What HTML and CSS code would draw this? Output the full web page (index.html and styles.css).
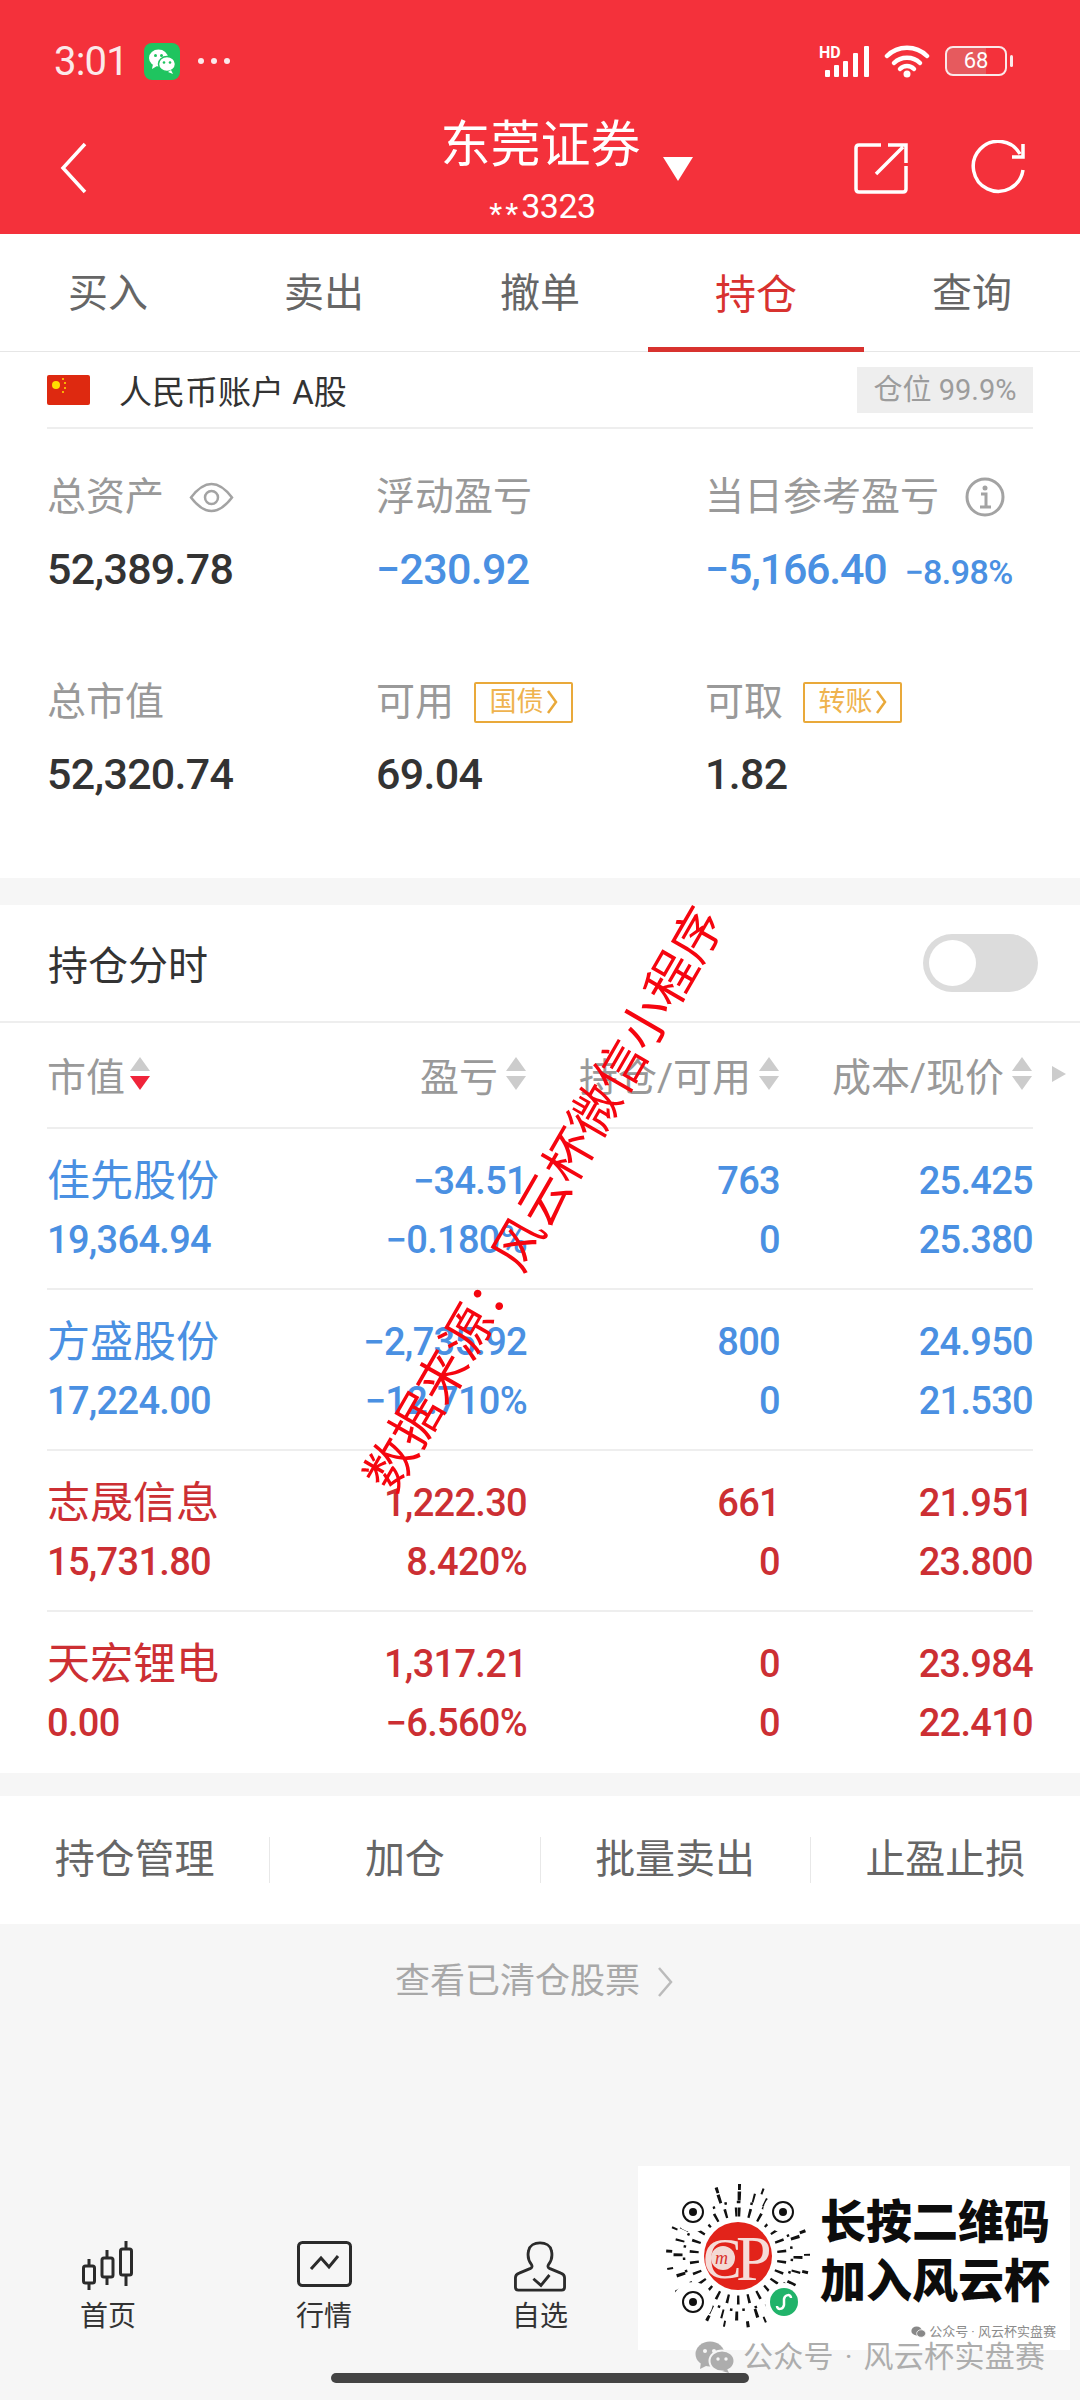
FILE: index.html
```html
<!DOCTYPE html>
<html lang="zh-CN">
<head>
    <meta charset="UTF-8">
    <meta name="viewport" content="width=device-width, initial-scale=1.0">
    <title>东莞证券</title>
    <link rel="stylesheet" href="styles.css">
</head>
<body>
    <div class="page">
        <!-- Red header -->
        <header class="header">
            <div class="status-bar">
                <div class="status-left">
                    <span class="time">3:01</span>
                    <svg class="wechat-badge" viewBox="0 0 36 37">
                        <rect width="36" height="37" rx="8" fill="#1fc45f"/>
                        <ellipse cx="14.5" cy="15" rx="9.5" ry="8.5" fill="#fff"/>
                        <path d="M9 21l-1 5 5-3z" fill="#fff"/>
                        <ellipse cx="23" cy="21" rx="8.5" ry="7.5" fill="#fff" stroke="#1fc45f" stroke-width="1.5"/>
                        <path d="M27 27l2 4-5-2z" fill="#fff"/>
                        <circle cx="11.5" cy="12.5" r="1.5" fill="#1fc45f"/>
                        <circle cx="17.5" cy="12.5" r="1.5" fill="#1fc45f"/>
                        <circle cx="20" cy="19.5" r="1.3" fill="#1fc45f"/>
                        <circle cx="26" cy="19.5" r="1.3" fill="#1fc45f"/>
                    </svg>
                    <span class="dots"><i></i><i></i><i></i></span>
                </div>
                <div class="status-right">
                    <svg class="signal" viewBox="0 0 51 32">
                        <text x="0" y="13" class="hd">HD</text>
                        <g fill="#fff">
                            <rect x="6" y="25" width="5" height="7" rx="1"/>
                            <rect x="15" y="20" width="5" height="12" rx="1"/>
                            <rect x="24" y="16" width="5" height="16" rx="1"/>
                            <rect x="34" y="8" width="5" height="24" rx="1"/>
                            <rect x="45" y="1" width="5" height="31" rx="1"/>
                        </g>
                    </svg>
                    <svg class="wifi" viewBox="0 0 46 34">
                        <g fill="none" stroke="#fff" stroke-width="4.5" stroke-linecap="round">
                            <path d="M3 12C14 1 32 1 43 12"/>
                            <path d="M10 19C17 12 29 12 36 19"/>
                            <path d="M16 25C20 21 26 21 30 25"/>
                        </g>
                        <circle cx="23" cy="30" r="3.5" fill="#fff"/>
                    </svg>
                    <div class="battery">
                        <div class="battery-body"><span class="battery-num">68</span></div>
                        <i class="battery-nub"></i>
                    </div>
                </div>
            </div>
            <div class="nav-bar">
                <svg class="back" viewBox="0 0 27 52"><path d="M25 2L3 26l22 24" fill="none" stroke="#fff" stroke-width="3.5"/></svg>
                <div class="nav-title">
                    <div class="title-line">
                        <span class="title-text">东莞证券</span>
                        <i class="title-arrow"></i>
                    </div>
                    <div class="account-no"><span class="stars">**</span>3323</div>
                </div>
                <div class="nav-icons">
                    <svg class="share" viewBox="0 0 54 52">
                        <path d="M27 3H5C3 3 2 4 2 6v41c0 2 1 3 3 3h44c2 0 3-1 3-3V24" fill="none" stroke="#fff" stroke-width="3.5"/>
                        <path d="M22 32L49 5M34 3h18v18" fill="none" stroke="#fff" stroke-width="3.5"/>
                    </svg>
                    <svg class="refresh" viewBox="0 0 55 55">
                        <path d="M50 14A25 25 0 1 0 53 30" fill="none" stroke="#fff" stroke-width="3.5"/>
                        <path d="M42 17h11V4" fill="none" stroke="#fff" stroke-width="3.5"/>
                    </svg>
                </div>
            </div>
        </header>

        <!-- Tabs -->
        <nav class="tabs">
            <div class="tab">买入</div>
            <div class="tab">卖出</div>
            <div class="tab">撤单</div>
            <div class="tab tab-active">持仓</div>
            <div class="tab">查询</div>
        </nav>

        <!-- Account summary -->
        <section class="summary">
            <div class="account-row">
                <div class="account-name">
                    <svg class="flag" viewBox="0 0 43 30">
                        <rect width="43" height="30" rx="2" fill="#de2910"/>
                        <circle cx="9" cy="10" r="4" fill="#ffde00"/>
                        <g fill="#ffde00"><circle cx="16" cy="4" r="1"/><circle cx="18" cy="8" r="1"/><circle cx="18" cy="13" r="1"/><circle cx="16" cy="17" r="1"/></g>
                    </svg>
                    <span>人民币账户 A股</span>
                </div>
                <div class="position-badge">仓位 99.9%</div>
            </div>
            <div class="stats">
                <div class="stat">
                    <div class="stat-label">总资产
                        <svg class="eye" viewBox="0 0 45 31">
                            <path d="M2 15.5C10 5 16 2 22.500 2S35 5 43 15.500C35 26 29 29 22.500 29S10 26 2 15.500z" fill="none" stroke="#a3a3a3" stroke-width="2.500"/>
                            <circle cx="22.500" cy="15.500" r="6.500" fill="none" stroke="#a3a3a3" stroke-width="2.500"/>
                        </svg>
                    </div>
                    <div class="stat-value">52,389.78</div>
                </div>
                <div class="stat">
                    <div class="stat-label">浮动盈亏</div>
                    <div class="stat-value blue">−230.92</div>
                </div>
                <div class="stat">
                    <div class="stat-label">当日参考盈亏
                        <svg class="info" viewBox="0 0 40 40">
                            <circle cx="20" cy="20" r="18" fill="none" stroke="#a3a3a3" stroke-width="3"/>
                            <circle cx="20" cy="11" r="2.500" fill="#a3a3a3"/>
                            <path d="M16 17h5v13M15 30h11" fill="none" stroke="#a3a3a3" stroke-width="3"/>
                        </svg>
                    </div>
                    <div class="stat-value blue tight">−5,166.40<span class="stat-pct">−8.98%</span></div>
                </div>
                <div class="stat">
                    <div class="stat-label">总市值</div>
                    <div class="stat-value">52,320.74</div>
                </div>
                <div class="stat">
                    <div class="stat-label">可用<span class="tag">国债<svg class="tag-arrow" viewBox="0 0 12 26"><path d="M2 2l8 11-8 11" fill="none" stroke="#e9a93a" stroke-width="2.500"/></svg></span></div>
                    <div class="stat-value">69.04</div>
                </div>
                <div class="stat">
                    <div class="stat-label">可取<span class="tag">转账<svg class="tag-arrow" viewBox="0 0 12 26"><path d="M2 2l8 11-8 11" fill="none" stroke="#e9a93a" stroke-width="2.500"/></svg></span></div>
                    <div class="stat-value">1.82</div>
                </div>
            </div>
        </section>

        <!-- Holdings -->
        <section class="holdings">
            <div class="toggle-row">
                <span>持仓分时</span>
                <div class="toggle"><i class="toggle-knob"></i></div>
            </div>
            <div class="table">
                <div class="table-head">
                    <div class="th th-left">市值<span class="sort sort-down"></span></div>
                    <div class="th">盈亏<span class="sort"></span></div>
                    <div class="th">持仓/可用<span class="sort"></span></div>
                    <div class="th">成本/现价<span class="sort"></span><i class="more-arrow"></i></div>
                </div>
                <div class="table-row loss">
                    <div class="cell-left"><div class="stock-name">佳先股份</div><div>19,364.94</div></div>
                    <div class="cell"><div>−34.51</div><div>−0.180%</div></div>
                    <div class="cell"><div>763</div><div>0</div></div>
                    <div class="cell"><div>25.425</div><div>25.380</div></div>
                </div>
                <div class="table-row loss">
                    <div class="cell-left"><div class="stock-name">方盛股份</div><div>17,224.00</div></div>
                    <div class="cell"><div>−2,735.92</div><div>−12.710%</div></div>
                    <div class="cell"><div>800</div><div>0</div></div>
                    <div class="cell"><div>24.950</div><div>21.530</div></div>
                </div>
                <div class="table-row gain">
                    <div class="cell-left"><div class="stock-name">志晟信息</div><div>15,731.80</div></div>
                    <div class="cell"><div>1,222.30</div><div>8.420%</div></div>
                    <div class="cell"><div>661</div><div>0</div></div>
                    <div class="cell"><div>21.951</div><div>23.800</div></div>
                </div>
                <div class="table-row gain">
                    <div class="cell-left"><div class="stock-name">天宏锂电</div><div>0.00</div></div>
                    <div class="cell"><div>1,317.21</div><div>−6.560%</div></div>
                    <div class="cell"><div>0</div><div>0</div></div>
                    <div class="cell"><div>23.984</div><div>22.410</div></div>
                </div>
            </div>
        </section>

        <!-- Actions -->
        <section class="actions">
            <div class="action">持仓管理</div>
            <div class="action">加仓</div>
            <div class="action">批量卖出</div>
            <div class="action">止盈止损</div>
        </section>

        <div class="bottom-area">
            <div class="cleared">查看已清仓股票
                <svg class="cleared-arrow" viewBox="0 0 16 30"><path d="M2 1l12 14L2 29" fill="none" stroke="#bbb" stroke-width="2.500"/></svg>
            </div>
            <nav class="bottom-nav">
                <div class="nav-item">
                    <svg class="nav-candle" viewBox="0 0 52 49">
                        <g fill="none" stroke="#2b2b2b" stroke-width="3">
                            <path d="M7 18v7M7 42v7M25 9v8M25 36v8M44 0v8M44 34v11"/>
                            <rect x="1.500" y="25" width="11" height="17" rx="2"/>
                            <rect x="20" y="17" width="11" height="19" rx="2"/>
                            <rect x="38.500" y="8" width="11" height="26" rx="2"/>
                        </g>
                    </svg>
                    <span>首页</span>
                </div>
                <div class="nav-item">
                    <svg class="nav-chart" viewBox="0 0 55 46">
                        <rect x="1.500" y="1.500" width="52" height="43" rx="4" fill="none" stroke="#2b2b2b" stroke-width="3"/>
                        <path d="M14 28l10-11 8 9 9-11" fill="none" stroke="#2b2b2b" stroke-width="3"/>
                    </svg>
                    <span>行情</span>
                </div>
                <div class="nav-item">
                    <svg class="nav-person" viewBox="0 0 56 54">
                        <path d="M19 25C15 20 15 14 16 10C17 5 22 2 28 2C34 2 39 5 40 10C41 14 41 20 37 25C36 27 36 28 38 29L50 34C53 35 54 37 54 39L54 49C54 51 53 52 51 52L5 52C3 52 2 51 2 49L2 39C2 37 3 35 6 34L18 29C20 28 20 27 19 25Z" fill="none" stroke="#2b2b2b" stroke-width="3"/>
                        <path d="M21 40l8 7 9-11" fill="none" stroke="#2b2b2b" stroke-width="3"/>
                    </svg>
                    <span>自选</span>
                </div>
                <div class="nav-item"></div>
                <div class="nav-item"></div>
            </nav>
        </div>

        <!-- Things pasted over the screenshot -->
        <div class="watermark">数据来源：风云杯微信小程序</div>

        <div class="promo">
            <svg class="qr" viewBox="0 0 160 160">
                <g fill="none" stroke="#111" transform="rotate(-90 80 80)">
                    <circle cx="80" cy="80" r="44" stroke-width="9" stroke-dasharray="2.500 8"/>
                    <circle cx="80" cy="80" r="54" stroke-width="2.500" stroke-dasharray="2.500 10"/>
                    <circle cx="80" cy="80" r="60" stroke-width="9" stroke-dasharray="3 12 2 10 3 17"/>
                    <circle cx="80" cy="80" r="69" stroke-width="6" stroke-dasharray="3 21 2 15"/>
                </g>
                <g>
                    <circle cx="35" cy="36" r="20" fill="#fff"/>
                    <circle cx="125" cy="36" r="20" fill="#fff"/>
                    <circle cx="35" cy="126" r="20" fill="#fff"/>
                    <circle cx="126" cy="126" r="19" fill="#fff"/>
                </g>
                <g fill="none" stroke="#111" stroke-width="2">
                    <circle cx="35" cy="36" r="10"/><circle cx="125" cy="36" r="10"/><circle cx="35" cy="126" r="10"/>
                </g>
                <g fill="#111"><circle cx="35" cy="36" r="4"/><circle cx="125" cy="36" r="4"/><circle cx="35" cy="126" r="4"/></g>
                <circle cx="80" cy="80" r="34" fill="#e2231a"/>
                <circle cx="65" cy="82" r="12" fill="#f3d9d4"/>
                <text x="45" y="102" class="qr-c">C</text>
                <text x="78" y="104" class="qr-p">P</text>
                <text x="57" y="88" class="qr-m">m</text>
                <circle cx="126" cy="126" r="14" fill="#21b36a"/>
                <path d="M119 130c0 4 6 4 7-1v-6c1-5 7-5 7-1" fill="none" stroke="#fff" stroke-width="2.500"/>
            </svg>
            <div class="promo-text">
                <div>长按二维码</div>
                <div>加入风云杯</div>
            </div>
            <div class="promo-small">
                <svg class="wx-small" viewBox="0 0 40 32">
                    <ellipse cx="15" cy="13" rx="14" ry="12" fill="#888"/>
                    <ellipse cx="27" cy="20" rx="12" ry="10" fill="#888" stroke="#fff" stroke-width="2"/>
                </svg>公众号 · 风云杯实盘赛
            </div>
        </div>
        <div class="account-mark">
            <svg class="wx-mark" viewBox="0 0 40 32">
                <ellipse cx="15" cy="13" rx="14.500" ry="12.500" fill="#adadad"/>
                <path d="M6 21l-1 7 8-4z" fill="#adadad"/>
                <ellipse cx="27" cy="20" rx="12.500" ry="10.500" fill="#adadad" stroke="#f6f6f6" stroke-width="2"/>
                <path d="M32 28l2 4-7-2z" fill="#adadad"/>
                <g fill="#f6f6f6"><circle cx="10" cy="10" r="2"/><circle cx="19" cy="10" r="2"/><circle cx="23" cy="18" r="1.700"/><circle cx="31" cy="18" r="1.700"/></g>
            </svg>公众号 · 风云杯实盘赛
        </div>
        <div class="home-bar"></div>
    </div>
</body>
</html>
```

FILE: styles.css
```css
* {
    box-sizing: border-box;
}
html, body {
    margin: 0;
    padding: 0;
}
body {
    font-family: Roboto, "Noto Sans CJK SC", sans-serif;
    color: #333;
    background-color: #f6f6f6;
}
svg {
    display: block;
}
.page {
    position: relative;
    width: 1080px;
    height: 2400px;
    display: flex;
    flex-direction: column;
    overflow: hidden;
}

/* header */
.header {
    height: 234px;
    flex: none;
    background-color: #f4313b;
    color: #fff;
}
.status-bar {
    height: 122px;
    padding: 0 67px 0 54px;
    display: flex;
    justify-content: space-between;
    align-items: center;
}
.status-left, .status-right {
    display: flex;
    align-items: center;
}
.time {
    font-size: 40px;
    letter-spacing: -0.8px;
    width: 90px;
    color: #fbe9ea;
}
.wechat-badge {
    width: 36px;
    height: 37px;
}
.dots {
    display: flex;
    gap: 7px;
    margin-left: 18px;
}
.dots i {
    width: 6px;
    height: 6px;
    border-radius: 50%;
    background-color: #fbe9ea;
}
.signal {
    width: 51px;
    height: 32px;
}
.hd {
    font-size: 16px;
    font-weight: 700;
    fill: #fff;
}
.wifi {
    width: 46px;
    height: 34px;
    margin-left: 14px;
}
.battery {
    display: flex;
    align-items: center;
    margin-left: 15px;
}
.battery-body {
    width: 62px;
    height: 30px;
    border: 2.5px solid #fbe9ea;
    border-radius: 8px;
    background: linear-gradient(to right, #e65a5e 68%, transparent 68%);
    display: flex;
    align-items: center;
    justify-content: center;
}
.battery-num {
    font-size: 22px;
    line-height: 22px;
    color: #fff;
}
.battery-nub {
    width: 3px;
    height: 12px;
    margin-left: 3px;
    border-radius: 2px;
    background-color: #fbe9ea;
}
.nav-bar {
    height: 112px;
    padding: 0 55px 0 60px;
    display: grid;
    grid-template-columns: 1fr auto 1fr;
    align-items: start;
}
.back {
    width: 27px;
    height: 52px;
    margin-top: 20px;
}
.nav-title {
    text-align: center;
}
.title-line {
    display: flex;
    align-items: center;
    padding-left: 48px;
    height: 46px;
}
.title-text {
    font-size: 50px;
    line-height: 46px;
    font-weight: 400;
}
.title-arrow {
    margin: 48px 0 0 22px;
    width: 0;
    height: 0;
    border-left: 15px solid transparent;
    border-right: 15px solid transparent;
    border-top: 24px solid #fff;
}
.account-no {
    font-size: 34px;
    line-height: 30px;
    margin-top: 23px;
    letter-spacing: -0.5px;
}
.stars {
    font-size: 30px;
    letter-spacing: 3px;
    vertical-align: -6px;
}
.nav-icons {
    display: flex;
    justify-content: flex-end;
    gap: 62px;
}
.share {
    width: 54px;
    height: 52px;
    margin-top: 20px;
}
.refresh {
    width: 55px;
    height: 55px;
    margin-top: 18px;
}

/* tabs */
.tabs {
    height: 118px;
    flex: none;
    display: flex;
    background-color: #fff;
    border-bottom: 1px solid #e6e6e6;
}
.tab {
    flex: 1;
    display: flex;
    align-items: center;
    justify-content: center;
    font-size: 40px;
    color: #666;
    padding-bottom: 5px;
}
.tab-active {
    font-size: 41px;
    color: #d8322f;
    border-bottom: 5px solid #d8322f;
    padding-bottom: 0;
    margin-bottom: -1px;
}

/* summary */
.summary {
    height: 526px;
    flex: none;
    padding: 0 47px;
    background-color: #fff;
}
.account-row {
    height: 77px;
    display: flex;
    justify-content: space-between;
    align-items: center;
    border-bottom: 2px solid #eee;
}
.account-name {
    display: flex;
    align-items: center;
    font-size: 33px;
    color: #333;
}
.flag {
    width: 43px;
    height: 30px;
    margin-right: 29px;
}
.position-badge {
    width: 176px;
    height: 46px;
    line-height: 46px;
    text-align: center;
    font-size: 29px;
    color: #9c9c9c;
    background-color: #eee;
}
.stats {
    display: grid;
    grid-template-columns: 329px 329px 1fr;
    grid-auto-rows: 205px;
    padding-top: 46px;
}
.stat-label {
    display: flex;
    align-items: center;
    height: 44px;
    font-size: 39px;
    line-height: 44px;
    color: #999;
}
.stat-value {
    margin-top: 25px;
    font-size: 43px;
    letter-spacing: -0.7px;
    line-height: 50px;
    font-weight: 500;
    color: #333;
    white-space: nowrap;
}
.stat-value.blue {
    color: #4a90e2;
}
.stat-value.tight {
    letter-spacing: -1.2px;
}
.stat-pct {
    font-size: 34px;
    letter-spacing: -0.6px;
    margin-left: 18px;
}
.eye {
    width: 45px;
    height: 31px;
    margin-left: 25px;
}
.info {
    width: 40px;
    height: 40px;
    margin-left: 26px;
}
.tag {
    display: flex;
    align-items: center;
    justify-content: center;
    gap: 2px;
    width: 99px;
    height: 41px;
    margin-left: 20px;
    border: 2.5px solid #e9a93a;
    border-radius: 2px;
    font-size: 27px;
    line-height: 36px;
    color: #efb34e;
}
.tag-arrow {
    width: 12px;
    height: 26px;
}

/* holdings */
.holdings {
    margin-top: 27px;
    flex: none;
    background-color: #fff;
}
.toggle-row {
    height: 118px;
    padding: 0 42px 0 48px;
    display: flex;
    justify-content: space-between;
    align-items: center;
    font-size: 40px;
    color: #333;
    border-bottom: 2px solid #eee;
}
.toggle {
    width: 115px;
    height: 58px;
    padding: 6px;
    border-radius: 29px;
    background-color: #dcdcdc;
}
.toggle-knob {
    display: block;
    width: 47px;
    height: 46px;
    border-radius: 50%;
    background-color: #fff;
}
.table {
    padding: 0 47px;
}
.table-head, .table-row {
    display: grid;
    grid-template-columns: 240px 240px 253px 253px;
}
.table-head {
    height: 106px;
    padding-bottom: 3px;
    align-items: center;
    border-bottom: 2px solid #eee;
}
.th {
    position: relative;
    display: flex;
    justify-content: flex-end;
    align-items: center;
    font-size: 39px;
    color: #999;
    white-space: nowrap;
}
.th-left {
    justify-content: flex-start;
}
.sort {
    position: relative;
    width: 21px;
    height: 33px;
    margin-left: 8px;
    flex: none;
}
.sort::before, .sort::after {
    content: "";
    position: absolute;
    left: 0;
    width: 0;
    height: 0;
    border-left: 10.5px solid transparent;
    border-right: 10.5px solid transparent;
}
.sort::before {
    top: 0;
    border-bottom: 14px solid #ccc;
}
.sort::after {
    bottom: 0;
    border-top: 14px solid #ccc;
}
.sort-down {
    margin-left: 5px;
}
.sort-down::after {
    border-top-color: #f0243a;
}
.more-arrow {
    position: absolute;
    right: -33px;
    top: 50%;
    margin-top: -8px;
    width: 0;
    height: 0;
    border-top: 8px solid transparent;
    border-bottom: 8px solid transparent;
    border-left: 14px solid #ccc;
}
.table-row {
    height: 161px;
    padding-top: 23px;
    border-bottom: 2px solid #eee;
    font-size: 38px;
    letter-spacing: -0.7px;
    line-height: 59px;
    font-weight: 500;
}
.table-row:last-child {
    border-bottom: none;
}
.loss {
    color: #4a90e2;
}
.gain {
    color: #cc2f33;
}
.cell {
    text-align: right;
}
.stock-name {
    font-size: 43px;
    letter-spacing: 0;
    font-weight: 400;
    line-height: 59px;
}

/* actions */
.actions {
    margin-top: 23px;
    height: 128px;
    flex: none;
    display: flex;
    align-items: center;
    background-color: #fff;
}
.action {
    flex: 1;
    height: 46px;
    line-height: 46px;
    text-align: center;
    font-size: 40px;
    color: #666;
    border-right: 1px solid #e8e8e8;
}
.action:last-child {
    border-right: none;
}

/* bottom */
.bottom-area {
    flex: 1;
    display: flex;
    flex-direction: column;
    justify-content: space-between;
    padding-bottom: 65px;
}
.cleared {
    display: flex;
    justify-content: center;
    align-items: center;
    gap: 17px;
    margin-top: 36px;
    padding-right: 12px;
    font-size: 35px;
    line-height: 44px;
    color: #a8a8a8;
}
.cleared-arrow {
    width: 16px;
    height: 30px;
}
.bottom-nav {
    display: flex;
    height: 94px;
}
.nav-item {
    flex: 1;
    display: flex;
    flex-direction: column;
    align-items: center;
    justify-content: flex-end;
    font-size: 28px;
    line-height: 36px;
    color: #333;
}
.nav-candle {
    width: 52px;
    height: 49px;
    margin-bottom: 9px;
}
.nav-chart {
    width: 55px;
    height: 46px;
    margin-bottom: 12px;
}
.nav-person {
    width: 56px;
    height: 54px;
    margin-bottom: 7px;
}

/* overlays */
.watermark {
    position: absolute;
    left: 205px;
    top: 1170px;
    width: 680px;
    text-align: center;
    font-size: 51px;
    line-height: 60px;
    color: #f5050f;
    white-space: nowrap;
    transform: rotate(-60deg);
}
.promo {
    position: absolute;
    left: 638px;
    top: 2166px;
    width: 432px;
    height: 184px;
    background-color: #fff;
    display: flex;
    align-items: center;
}
.qr {
    width: 160px;
    height: 160px;
    margin: 0 0 4px 20px;
    flex: none;
}
.qr-c {
    font-family: "Liberation Serif", serif;
    font-size: 58px;
    fill: #f6dcd8;
}
.qr-p {
    font-family: "Liberation Serif", serif;
    font-size: 64px;
    fill: #f6dcd8;
}
.qr-m {
    font-family: "Liberation Serif", serif;
    font-size: 18px;
    font-style: italic;
    fill: #d9302a;
}
.promo-text {
    margin-left: 2px;
    font-size: 46px;
    line-height: 59px;
    font-weight: 900;
    color: #0c0c0c;
    margin-bottom: 12px;
}
.promo-small {
    position: absolute;
    right: 14px;
    bottom: 10px;
    display: flex;
    align-items: center;
    gap: 3px;
    font-size: 13px;
    line-height: 16px;
    color: #8c8c8c;
}
.wx-small {
    width: 15px;
    height: 12px;
}
.account-mark {
    position: absolute;
    left: 695px;
    top: 2337px;
    display: flex;
    align-items: center;
    gap: 8px;
    font-size: 30px;
    letter-spacing: 0.3px;
    word-spacing: 3px;
    line-height: 40px;
    color: #adadad;
    white-space: nowrap;
}
.wx-mark {
    width: 40px;
    height: 32px;
}
.home-bar {
    position: absolute;
    left: 331px;
    top: 2373px;
    width: 418px;
    height: 10px;
    border-radius: 5px;
    background-color: #444;
}
```
